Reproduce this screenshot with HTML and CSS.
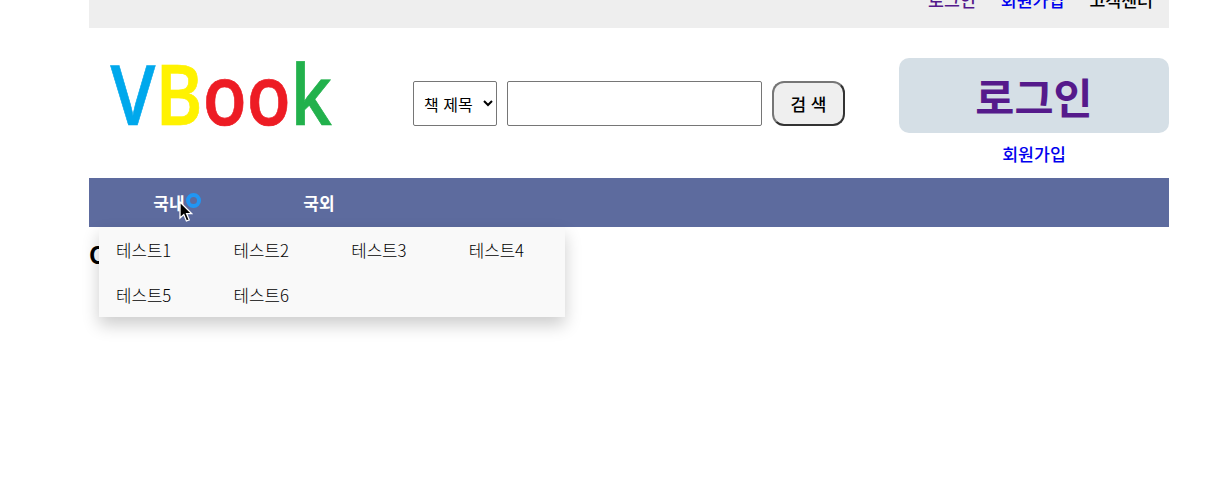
FILE: index.html
```html
<!DOCTYPE html>
<html lang="ko">
<head>
    <meta charset="UTF-8">
    <title>VBook</title>
    <link rel="stylesheet" href="styles.css">
</head>
<body>
    <div class="container">
        <div class="top-bar">
            <a class="visited" href="#">로그인</a>
            <a href="#">회원가입</a>
            <span>고객센터</span>
        </div>

        <header class="header">
            <div class="logo"><span class="blue">V</span><span class="yellow">B</span><span class="red">oo</span><span class="green">k</span></div>

            <form class="search">
                <select class="search-type">
                    <option>책 제목</option>
                </select>
                <input class="search-input" type="text">
                <button class="search-btn" type="button">검 색</button>
            </form>

            <div class="login-area">
                <a class="login-box" href="#">로그인</a>
                <a class="join" href="#">회원가입</a>
            </div>
        </header>

        <nav class="nav">
            <span class="nav-item">국내</span>
            <span class="nav-item">국외</span>

            <!-- dropdown open under 국내 -->
            <ul class="dropdown">
                <li>테스트1</li>
                <li>테스트2</li>
                <li>테스트3</li>
                <li>테스트4</li>
                <li>테스트5</li>
                <li>테스트6</li>
            </ul>

            <div class="spinner"></div>
            <svg class="cursor" width="14" height="21" viewBox="0 0 14 21">
                <path d="M1 1 L1 17 L4.8 13.6 L7.4 20 L10.2 18.8 L7.6 12.6 L12.6 12.6 Z" fill="#000" stroke="#fff" stroke-width="1.3"/>
            </svg>
        </nav>

        <h2 class="title">O</h2>
    </div>
</body>
</html>
```

FILE: styles.css
```css
* {
    margin: 0;
    padding: 0;
    box-sizing: border-box;
}

body {
    font-family: "Noto Sans CJK KR", "Noto Sans", sans-serif;
    background: #fff;
    min-height: 481px;
}

a {
    text-decoration: none;
    color: #0000ee;
}

.container {
    width: 1080px;
    margin-left: 89px;
}

.top-bar {
    height: 28px;
    background: #eeeeee;
    display: flex;
    justify-content: flex-end;
    align-items: flex-end;
    gap: 25px;
    padding: 0 16px 16px 0;
    font-size: 17.3px;
    font-weight: 500;
    line-height: 24px;
    color: #000;
    overflow: hidden;
}

.visited {
    color: #551a8b;
}

.header {
    height: 150px;
    display: flex;
}

.logo {
    width: 324px;
    padding: 9px 0 0 25px;
    font-family: "Open Sans", sans-serif;
    font-size: 84px;
    font-weight: 600;
    line-height: 112px;
    white-space: nowrap;
    -webkit-text-stroke: 0.7px;
    transform: scaleX(0.857);
    transform-origin: left;
    filter: blur(0.4px);
}

.blue { color: #00a8ec; }
.yellow { color: #fff200; }
.red { color: #ed1c24; }
.green { color: #22b14c; }

.search {
    width: 486px;
    padding-top: 53px;
    display: flex;
    align-items: flex-start;
    gap: 10px;
}

.search-type {
    width: 84px;
    height: 45px;
    padding-left: 6px;
    font-family: inherit;
    font-size: 16px;
    background: #fff;
    border: 1px solid #767676;
    border-radius: 2px;
}

.search-input {
    width: 255px;
    height: 45px;
    border: 1px solid #767676;
    border-radius: 2px;
}

.search-btn {
    width: 73px;
    height: 45px;
    font-family: inherit;
    font-size: 17px;
    font-weight: 500;
    background: #efefef;
    border: 2px solid;
    border-color: #767676 #333 #333 #767676;
    border-radius: 12px;
    color: #000;
}

.login-area {
    width: 270px;
    padding-top: 30px;
    display: flex;
    flex-direction: column;
    align-items: center;
}

.login-box {
    width: 100%;
    height: 75px;
    background: #d5dfe6;
    border-radius: 10px;
    color: #551a8b;
    font-size: 42.5px;
    font-weight: 700;
    line-height: 75px;
    text-align: center;
}

.join {
    margin-top: 9px;
    font-size: 17.3px;
    font-weight: 500;
    line-height: 24px;
}

.nav {
    position: relative;
    height: 49px;
    background: #5d6b9e;
    display: flex;
    padding-left: 5px;
}

.nav-item {
    width: 150px;
    color: #fff;
    font-size: 17px;
    font-weight: 700;
    line-height: 50px;
    text-align: center;
}

.dropdown {
    position: absolute;
    left: 10px;
    top: 49px;
    width: 466px;
    height: 90px;
    padding: 2px 0 0 17px;
    display: grid;
    grid-template-columns: repeat(4, 117.6px);
    grid-auto-rows: 45px;
    list-style: none;
    background: #f9f9f9;
    box-shadow: 0 8px 16px rgba(0, 0, 0, 0.2);
    font-size: 16.8px;
    font-weight: 300;
    line-height: 43px;
    color: #000;
}

.spinner {
    position: absolute;
    left: 97px;
    top: 15px;
    width: 15px;
    height: 15px;
    border: 4px solid #2196f3;
    border-radius: 50%;
}

.cursor {
    position: absolute;
    left: 90px;
    top: 23px;
}

.title {
    font-size: 24px;
    line-height: 53px;
    color: #000;
}
```
